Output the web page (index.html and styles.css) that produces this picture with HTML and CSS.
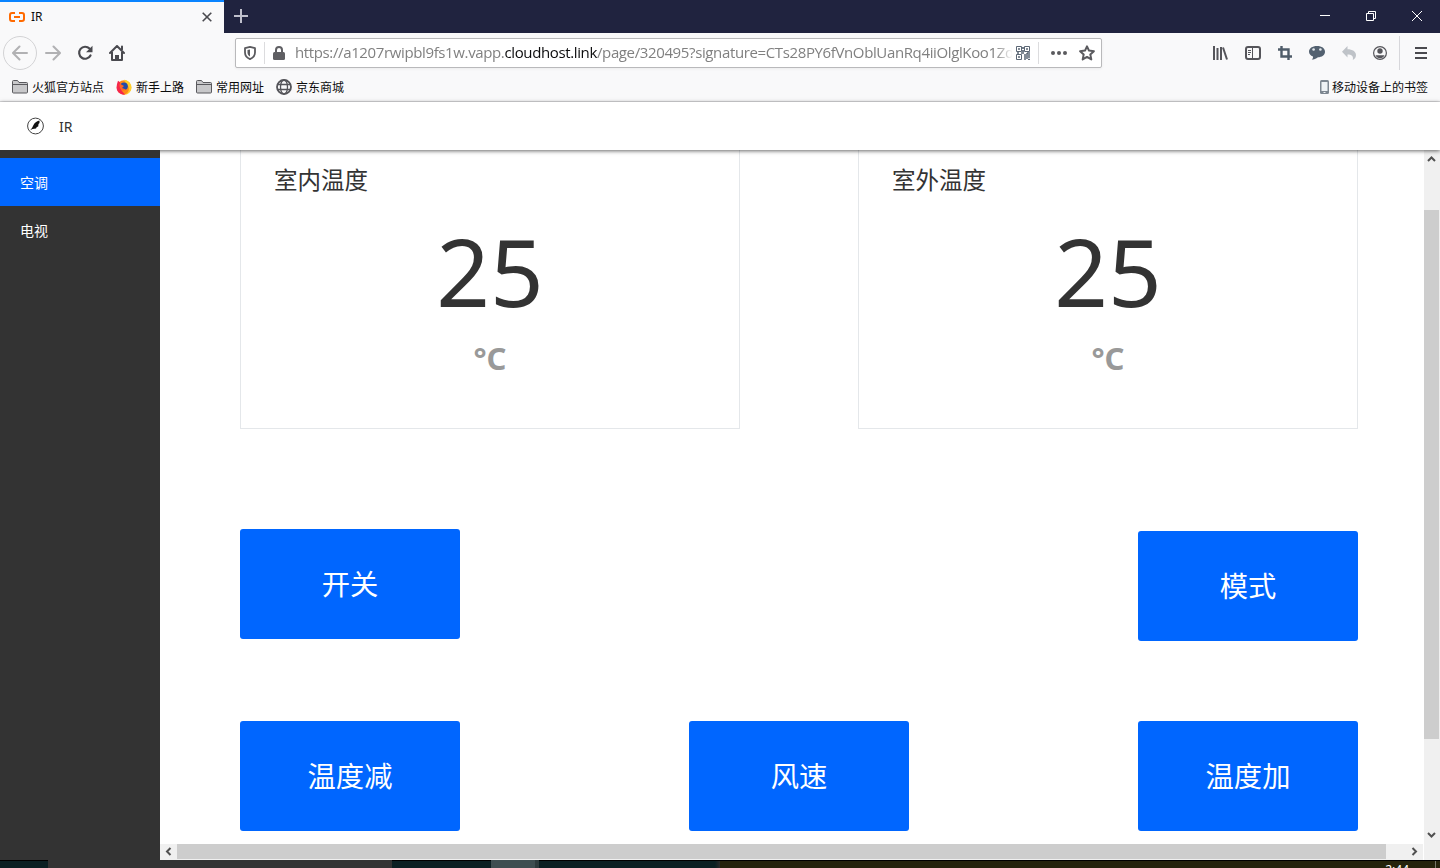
FILE: index.html
```
<!DOCTYPE html>
<html lang="zh-CN">
<head>
    <meta charset="UTF-8">
    <meta name="viewport" content="width=device-width, initial-scale=1.0">
    <title>IR</title>
    <link rel="stylesheet" href="styles.css">
</head>
<body>
    <div class="titlebar">
        <div class="tab">
            <svg class="tab-logo" width="16" height="10" viewBox="0 0 16 10" fill="none" stroke="#ff6a00" stroke-width="2"><path d="M6 1H3Q1 1 1 3v4q0 2 2 2h3M10 1h3q2 0 2 2v4q0 2-2 2h-3M5 5h6"/></svg>
            <span class="tab-title">IR</span>
            <svg width="10" height="10" viewBox="0 0 10 10" stroke="#4a4a4f" stroke-width="1.6"><path d="M.7.7l8.6 8.6M9.3.7L.7 9.3"/></svg>
        </div>
        <svg class="new-tab" width="14" height="14" viewBox="0 0 14 14" stroke="#bfc0cc" stroke-width="2"><path d="M7 0v14M0 7h14"/></svg>
        <div class="window-buttons">
            <svg width="10" height="10" viewBox="0 0 10 10" stroke="#fff"><path d="M0 4.500h10"/></svg>
            <svg width="10" height="10" viewBox="0 0 10 10" fill="none" stroke="#fff"><path d="M.5 2.500h7v7h-7zM2.500 2.500v-2h7v7h-2"/></svg>
            <svg width="10" height="10" viewBox="0 0 10 10" stroke="#fff"><path d="M0 0l10 10M10 0L0 10"/></svg>
        </div>
    </div>

    <div class="toolbar">
        <div class="nav-buttons">
            <span class="back"><svg width="16" height="16" viewBox="0 0 16 16" fill="none" stroke="#b1b1b3" stroke-width="2" stroke-linecap="round" stroke-linejoin="round"><path d="M15 8H1.500M7.500 1.500L1 8l6.500 6.500"/></svg></span>
            <svg width="16" height="16" viewBox="0 0 16 16" fill="none" stroke="#b1b1b3" stroke-width="2" stroke-linecap="round" stroke-linejoin="round"><path d="M1 8h13.500M8.500 1.500L15 8l-6.500 6.500"/></svg>
            <svg width="16" height="16" viewBox="0 0 16 16"><path d="M12.500 3.600A6 6 0 1 0 13.500 10.500" fill="none" stroke="#4a4a4f" stroke-width="2.200" stroke-linecap="round"/><path d="M15.500.8v6.400H9z" fill="#4a4a4f"/></svg>
            <svg width="16" height="16" viewBox="0 0 16 16" fill="none" stroke="#4a4a4f" stroke-width="2" stroke-linecap="round" stroke-linejoin="round"><path d="M1 8l7-7 7 7M3 7v8h10V7M13 1.500v3"/><path d="M6 15v-5h4v5z" fill="#4a4a4f" stroke="none"/></svg>
        </div>
        <div class="urlbar">
            <svg width="12" height="14" viewBox="0 0 12 14"><path d="M6 .9l5 1.300v4.300c0 3-1.800 5.300-5 6.600-3.200-1.300-5-3.600-5-6.600V2.200z" fill="none" stroke="#5a5a5e" stroke-width="1.800" stroke-linejoin="round"/><path d="M6 3.500v7C4.200 9.500 3.500 8.200 3.500 6.500V4z" fill="#5a5a5e"/></svg>
            <i class="url-line"></i>
            <svg class="lock" width="12" height="14" viewBox="0 0 12 14"><rect y="6" width="12" height="8" rx="1.500" fill="#5f5f63"/><path d="M3 7V4a3 3 0 0 1 6 0v3" fill="none" stroke="#5f5f63" stroke-width="2"/></svg>
            <div class="url"><span>https://a1207rwipbl9fs1w.vapp.</span><b>cloudhost.link</b><span>/page/320495?signature=CTs28PY6fVnOblUanRq4iiOlglKoo1Zd</span></div>
            <svg class="qr" width="14" height="14" viewBox="0 0 14 14" fill="none" stroke="#5b6775"><path d="M.5.5h5v5h-5zM8.500.5h5v5h-5zM.5 8.500h5v5h-5z"/><path d="M2 3h2M10 3h2M2 11h2M7 1v2M7 4v2M1 7h2M5 7h3M11 7h3M8 9h2M10 8h2M8 11h2M10 10h2M12 9h2M10 12h2M12 11h2M8 13h2M12 13.500h2" stroke-width="1.700"/></svg>
            <i class="url-line"></i>
            <svg class="dots" width="16" height="4" viewBox="0 0 16 4" fill="#5a5a5e"><circle cx="2" cy="2" r="2"/><circle cx="8" cy="2" r="2"/><circle cx="14" cy="2" r="2"/></svg>
            <svg width="16" height="16" viewBox="0 0 16 16" fill="none" stroke="#5a5a5e" stroke-width="2" stroke-linejoin="round"><path d="M8 1.300l2 4.300 4.900.6-3.600 3.200 1 5L8 11.900l-4.300 2.500 1-5L1.100 6.200 6 5.600z"/></svg>
        </div>
        <div class="tools">
            <svg width="16" height="16" viewBox="0 0 16 16" stroke="#55555a" stroke-width="2"><path d="M2 1v14M5.500 3v12M9 2v13M11 2.500l4 12"/></svg>
            <svg width="16" height="14" viewBox="0 0 16 14" fill="none" stroke="#55555a"><rect x="1" y="1" width="14" height="12" rx="2" stroke-width="2"/><path d="M7.500 1v12M3 4.500h3M3 6.500h3M3 8.500h2"/></svg>
            <svg width="14" height="14" viewBox="0 0 14 14" fill="none" stroke="#4f5c69" stroke-width="2.400"><path d="M3.500 0v10.500H14M0 3.500h10.500V14"/></svg>
            <svg width="16" height="14" viewBox="0 0 16 14"><path d="M8 0c4.800 0 8 2.400 8 5.700s-3.200 5.500-7 5.500C7 12.700 5 13.600 2.700 13.600c1-1 1.500-2 1.300-3.200C1.500 9.500 0 7.800 0 5.700 0 2.400 3.200 0 8 0z" fill="#536170"/><circle cx="4.600" cy="3.500" r="1.300" fill="#e4e8ec"/><circle cx="11.400" cy="3.500" r="1.300" fill="#e4e8ec"/></svg>
            <svg width="14" height="14" viewBox="0 0 14 14"><path d="M5.500 0v3.200C10.500 3.200 14 5.500 14 9c0 2-1 4-3.200 5 1-4-1.300-5.500-5.300-5.600v3L0 5.700z" fill="#bfc3c8"/></svg>
            <svg width="14" height="14" viewBox="0 0 14 14"><circle cx="7" cy="7" r="6.400" fill="none" stroke="#55555a" stroke-width="1.200"/><circle cx="7" cy="5" r="2.700" fill="#55555a"/><path d="M2.500 9.200h9c-.8 2-2.500 3-4.500 3s-3.700-1-4.500-3z" fill="#55555a"/></svg>
            <i class="tools-line"></i>
            <svg width="12" height="12" viewBox="0 0 12 12" stroke="#4a4a4f" stroke-width="2"><path d="M0 1h12M0 6h12M0 11h12"/></svg>
        </div>
    </div>

    <div class="bookmarks">
        <span class="bookmark"><svg width="16" height="14" viewBox="0 0 16 14"><path d="M.5 12V1.500q0-1 1-1h4l1.500 2h7.500q1 0 1 1V12q0 1-1 1H1.500q-1 0-1-1z" fill="#c8c8ca" stroke="#59595d"/><path d="M1 4.500h14" stroke="#59595d"/></svg>火狐官方站点</span>
        <span class="bookmark"><svg width="16" height="16" viewBox="0 0 16 16"><circle cx="8" cy="8.500" r="7.200" fill="#ff8a16"/><path d="M8 .8c4 .4 7.500 3.200 7.500 7.700 0 4-3.200 7.200-7 7.200 4-1.700 5-4.700 4-7.700C12 5 9 4 8 .8z" fill="#ffd02b"/><path d="M1 5L2 1.700l2 1.500C5 5 3 8 6 12l3 3.600C4 16 .3 12.500.6 8z" fill="#f5264b"/><circle cx="8" cy="7.300" r="3.800" fill="#204ba8"/><path d="M3.500 4.500L8 7 6 9l4 1.500c-3 2.500-7 .5-6.500-6z" fill="#ff6524"/></svg>新手上路</span>
        <span class="bookmark"><svg width="16" height="14" viewBox="0 0 16 14"><path d="M.5 12V1.500q0-1 1-1h4l1.500 2h7.500q1 0 1 1V12q0 1-1 1H1.500q-1 0-1-1z" fill="#c8c8ca" stroke="#59595d"/><path d="M1 4.500h14" stroke="#59595d"/></svg>常用网址</span>
        <span class="bookmark"><svg width="16" height="16" viewBox="0 0 16 16" fill="none" stroke="#55555a" stroke-width="1.300"><circle cx="8" cy="8" r="7" stroke-width="1.800"/><ellipse cx="8" cy="8" rx="3.500" ry="7"/><path d="M1.500 5.500h13M1.500 10.500h13"/></svg>京东商城</span>
        <span class="bookmark mobile"><svg width="9" height="14" viewBox="0 0 9 14"><rect width="9" height="14" rx="1.500" fill="#7d8791"/><path d="M1.500 2h6v9h-6z" fill="#eef2f5"/><path d="M3.500 12.500h2" stroke="#eef2f5"/></svg>移动设备上的书签</span>
    </div>

    <div class="app-header">
        <svg width="17" height="18" viewBox="0 0 17 18"><circle cx="8.500" cy="9" r="7.900" fill="#fff" stroke="#444" stroke-width="1"/><path d="M12.500 3.500c-2 .4-5 2-6 4.500L5 11l-1.800 2.200L5.500 12l3.500-.4.800-1.600 1.400-.6.300-2.400 1-1z" fill="#111"/></svg>
        <span>IR</span>
    </div>

    <div class="main">
        <div class="sidebar">
            <a class="menu-item active">空调</a>
            <a class="menu-item">电视</a>
        </div>
        <div class="view">
            <div class="content">
                <div class="row">
                    <div class="card">
                        <div class="card-title">室内温度</div>
                        <div class="card-value">25</div>
                        <div class="card-unit">°C</div>
                    </div>
                    <div class="card">
                        <div class="card-title">室外温度</div>
                        <div class="card-value">25</div>
                        <div class="card-unit">°C</div>
                    </div>
                </div>
                <div class="row switch-row">
                    <div class="button">开关</div>
                    <div class="button mode">模式</div>
                </div>
                <div class="row">
                    <div class="button">温度减</div>
                    <div class="button">风速</div>
                    <div class="button">温度加</div>
                </div>
            </div>
            <div class="scroll-x">
                <svg width="17" height="15" viewBox="0 0 17 15" fill="none" stroke="#505050" stroke-width="2"><path d="M10.500 4L7 7.500l3.500 3.500"/></svg>
                <div class="thumb-x"></div>
                <svg width="17" height="15" viewBox="0 0 17 15" fill="none" stroke="#505050" stroke-width="2"><path d="M6.500 4L10 7.500 6.500 11"/></svg>
            </div>
        </div>
        <div class="scroll-y">
            <svg width="15" height="17" viewBox="0 0 15 17" fill="none" stroke="#505050" stroke-width="2"><path d="M4 11l3.500-3.500L11 11"/></svg>
            <div class="thumb-y"></div>
            <svg width="15" height="17" viewBox="0 0 15 17" fill="none" stroke="#505050" stroke-width="2"><path d="M4 7l3.500 3.500L11 7"/></svg>
        </div>
    </div>

    <div class="taskbar">
        <div class="task-start"></div>
        <div class="task-search"></div>
        <div class="task-dark"></div>
        <div class="task-active"></div>
        <div class="task-active-edge"></div>
        <div class="task-dark wide"></div>
        <div class="task-tray"><span class="clock">2:44</span><i class="desktop-line"></i></div>
    </div>
</body>
</html>
```
FILE: styles.css
```
* {
    box-sizing: border-box;
}

body {
    margin: 0;
    width: 1440px;
    height: 868px;
    overflow: hidden;
    display: flex;
    flex-direction: column;
    background-color: #fff;
    color: #333;
    font-family: "Noto Sans", "Noto Sans CJK SC", sans-serif;
}

svg {
    display: block;
    flex: none;
}

/* browser window */
.titlebar {
    flex: none;
    height: 33px;
    padding-bottom: 1px;
    display: flex;
    align-items: center;
    background-color: #20233f;
}

.tab {
    width: 224px;
    height: 33px;
    margin-bottom: -1px;
    padding: 0 12px 2px 9px;
    display: flex;
    align-items: center;
    background-color: #f9f9fa;
    border-top: 2px solid #0a84ff;
    font-size: 12px;
    color: #0c0c0d;
}

.tab-title {
    flex: 1;
    padding-left: 6px;
}

.new-tab {
    margin-left: 10px;
}

.window-buttons {
    margin-left: auto;
    padding-right: 18px;
    display: flex;
    gap: 36px;
}

.toolbar {
    flex: none;
    height: 40px;
    display: flex;
    align-items: center;
    background-color: #f9f9fa;
}

.nav-buttons {
    width: 235px;
    padding-left: 3px;
    display: flex;
    align-items: center;
    gap: 16px;
}

.back {
    width: 34px;
    height: 34px;
    margin-right: -8px;
    display: flex;
    align-items: center;
    justify-content: center;
    border: 1px solid #d3d3d5;
    border-radius: 50%;
}

.urlbar {
    width: 867px;
    height: 30px;
    padding: 0 6px 0 8px;
    display: flex;
    align-items: center;
    background-color: #fff;
    border: 1px solid #b9b9bb;
    border-radius: 2px;
    box-shadow: 0 1px 3px rgba(0, 0, 0, 0.06);
}

.url-line {
    width: 1px;
    height: 22px;
    margin: 0 8px;
    background-color: #dcdcde;
}

.url {
    width: 718px;
    margin-left: 10px;
    overflow: hidden;
    white-space: nowrap;
    font-family: "Open Sans", sans-serif;
    font-size: 15px;
    letter-spacing: -0.37px;
    line-height: 24px;
    padding-bottom: 2px;
    color: #808080;
    -webkit-mask-image: linear-gradient(to right, #000 700px, transparent 718px);
    mask-image: linear-gradient(to right, #000 700px, transparent 718px);
}

.url b {
    font-weight: normal;
    color: #0c0c0d;
}

.qr {
    margin-left: 4px;
}

.dots {
    margin: 0 12px 0 4px;
}

.tools {
    flex: 1;
    padding-right: 13px;
    display: flex;
    align-items: center;
    justify-content: flex-end;
    gap: 17px;
}

.tools-line {
    width: 1px;
    height: 34px;
    margin: 0 -2px 0 -5px;
    background-color: #d7d7db;
}

.bookmarks {
    flex: none;
    height: 29px;
    padding: 0 12px;
    display: flex;
    align-items: center;
    gap: 12px;
    background-color: #f9f9fa;
    border-bottom: 1px solid #dedee0;
    font-size: 12px;
    color: #0c0c0d;
}

.bookmark {
    display: flex;
    align-items: center;
    gap: 4px;
}

.bookmark.mobile {
    margin-left: auto;
    gap: 3px;
}

/* page */
.app-header {
    position: relative;
    z-index: 1;
    flex: none;
    height: 48px;
    padding-left: 27px;
    display: flex;
    align-items: center;
    gap: 15px;
    background-color: #fff;
    box-shadow: 0 1px 4px rgba(0, 0, 0, 0.6);
    font-size: 14px;
}

.main {
    flex: none;
    height: 710px;
    display: flex;
}

.sidebar {
    position: relative;
    z-index: 2;
    width: 160px;
    padding-top: 8px;
    background-color: #333;
}

.menu-item {
    display: block;
    height: 48px;
    padding-left: 20px;
    line-height: 49px;
    font-size: 14px;
    color: #fff;
}

.menu-item.active {
    background-color: #0066ff;
}

.view {
    width: 1264px;
    display: flex;
    flex-direction: column;
}

.content {
    height: 694px;
    padding: 0 66px 0 80px;
    overflow: hidden;
}

.row {
    display: flex;
    justify-content: space-between;
    align-items: flex-start;
}

.card {
    width: 500px;
    height: 279px;
    border: 1px solid #e4e7ea;
    border-top: none;
    text-align: center;
}

.card-title {
    padding: 12px 0 0 33px;
    text-align: left;
    font-size: 23.5px;
    line-height: 36px;
}

.card-value {
    margin-top: 18px;
    font-size: 94px;
    line-height: 110px;
}

.card-unit {
    margin-top: 12px;
    font-size: 31px;
    font-weight: bold;
    line-height: 40px;
    color: #999;
}

.switch-row {
    height: 192px;
    margin-top: 100px;
}

.button {
    width: 220px;
    height: 110px;
    background-color: #0066ff;
    border-radius: 3px;
    text-align: center;
    line-height: 110px;
    font-size: 28.3px;
    color: #fff;
}

.button.mode {
    margin-top: 2px;
}

.scroll-x {
    height: 16px;
    padding-bottom: 1px;
    display: flex;
    justify-content: space-between;
    background-color: #f0f0f0;
    border-right: 1px solid #fff;
}

.thumb-x {
    width: 1209px;
    margin-right: auto;
    background-color: #cdcdcd;
}

.scroll-y {
    width: 16px;
    padding-right: 1px;
    display: flex;
    flex-direction: column;
    background-color: #f0f0f0;
}

.thumb-y {
    height: 529px;
    margin: 43px 0 87px;
    background-color: #cdcdcd;
}

/* windows taskbar */
.taskbar {
    flex: none;
    height: 8px;
    display: flex;
    overflow: hidden;
    background-color: #333;
}

.task-start {
    width: 48px;
    background-color: #0b2023;
    border-top: 1px solid #000;
}

.task-search {
    width: 344px;
}

.task-dark {
    width: 99px;
    background-color: #0b2023;
    border-top: 1px solid #000;
}

.task-active {
    width: 44px;
    background-color: #3e4e51;
}

.task-active-edge {
    width: 4px;
    background-color: #2d3b3d;
}

.task-dark.wide {
    width: 181px;
    background-image: linear-gradient(to right, transparent 176px, #292929);
}

.task-tray {
    flex: 1;
    padding-right: 4px;
    display: flex;
    justify-content: flex-end;
    background-color: #25230c;
    border-top: 1px solid #000;
}

.clock {
    margin-right: 26px;
    font-size: 12px;
    line-height: 17px;
    color: #fff;
}

.desktop-line {
    width: 1px;
    background-color: #77766a;
}
```
